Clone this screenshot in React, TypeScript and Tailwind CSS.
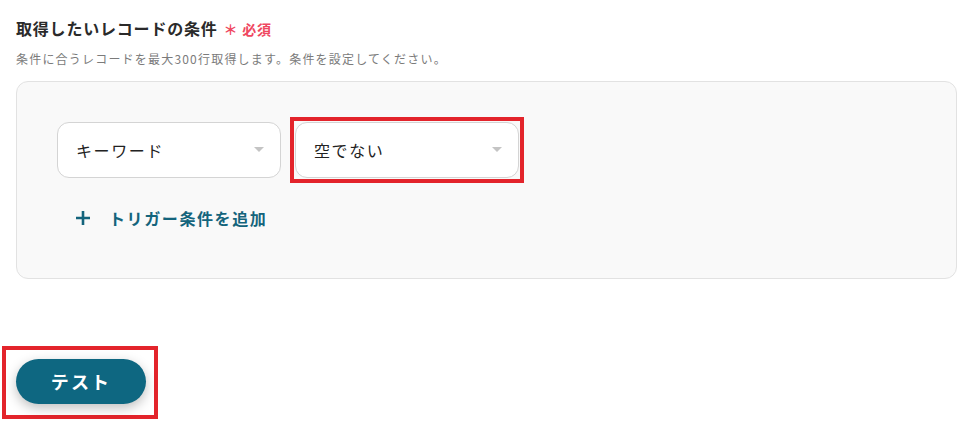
import React from 'react';

const font = { fontFamily: '"Noto Sans CJK JP", "Noto Sans", sans-serif' };

const Caret = () => (
  <svg width="12" height="6" viewBox="0 0 12 6" className="shrink-0">
    <path d="M1 0h10L6 5z" fill="#c4c4c4" />
  </svg>
);

const SelectBox = ({ label }: { label: string }) => (
  <div className="flex h-[56px] w-[224px] items-center justify-between rounded-[12px] border border-[#d4d4d4] bg-white pl-[18px] pr-[15px]">
    <span className="text-[16px] tracking-[0.1em] text-[#222]">{label}</span>
    <Caret />
  </div>
);

export default function App() {
  return (
    <div className="h-[422px] w-[962px] bg-white" style={font}>
      <div className="pl-4 pr-[5px] pt-[16px]">
        <div className="flex items-center gap-[6px]">
          <h2 className="text-[16px] font-bold leading-[24px] tracking-[0.05em] text-[#2a2a2a]">取得したいレコードの条件</h2>
          <span className="mt-[2px] text-[14px] font-bold tracking-[0.05em] text-[#ef4760]">＊ 必須</span>
        </div>
        <p className="mt-[10px] text-[12px] leading-[18px] tracking-[0.1em] text-[#7b7b7b]">
          条件に合うレコードを最大300行取得します。条件を設定してください。
        </p>
        <div className="mt-[13px] h-[198px] rounded-[12px] border border-[#e2e2e2] bg-[#f9f9f9] pl-[40px] pt-[40px]">
          <div className="flex items-start gap-[9px]">
            <SelectBox label="キーワード" />
            <div className="-mt-[5px] border-4 border-[#e3242b] p-[1px]">
              <SelectBox label="空でない" />
            </div>
          </div>
          <button className="mt-[23px] flex items-center gap-[18px] pl-[18px] text-[16px] font-bold tracking-[0.1em] text-[#14647c]">
            <svg width="16" height="16" viewBox="0 0 16 16">
              <path d="M8 1v14M1 8h14" stroke="#14647c" strokeWidth="2.6" />
            </svg>
            トリガー条件を追加
          </button>
        </div>
      </div>
      <div className="ml-[2px] mt-[67px] inline-block border-4 border-[#e3242b] pb-[11px] pl-[10px] pr-[8px] pt-[9px]">
        <button className="flex h-[45px] w-[130px] items-center justify-center rounded-full bg-[#0e6781] text-[18px] font-bold tracking-[0.12em] text-white shadow-[0_4px_12px_rgba(0,0,0,0.25)]">
          テスト
        </button>
      </div>
    </div>
  );
}
